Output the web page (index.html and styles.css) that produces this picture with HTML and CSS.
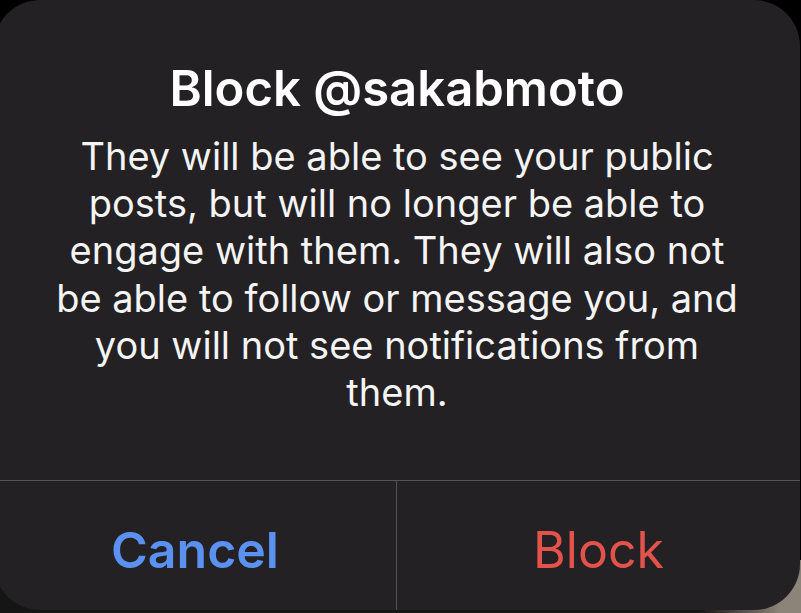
FILE: index.html
```html
<!DOCTYPE html>
<html lang="en">
<head>
    <meta charset="UTF-8">
    <meta name="viewport" content="width=device-width, initial-scale=1.0">
    <title>Block @sakabmoto</title>
    <link rel="stylesheet" href="styles.css">
</head>
<body>

<div class="alerta">
    <div class="alerta-corpo">
        <h1 class="alerta-titulo">Block @sakabmoto</h1>
        <p class="alerta-texto">They will be able to see your public posts, but will no longer be able to engage with them. They will also not be able to follow or message you, and you will not see notifications from them.</p>
    </div>
    <div class="alerta-botoes">
        <button class="botao botao-cancelar">Cancel</button>
        <button class="botao botao-bloquear">Block</button>
    </div>
</div>

</body>
</html>
```

FILE: styles.css
```css
* {
    box-sizing: border-box;
}

body {
    margin: 0;
    height: 613px;
    overflow: hidden;
    font-family: Inter, "Noto Sans", sans-serif;
    background:
        linear-gradient(#000 0, #000 560px, transparent 560px),
        linear-gradient(90deg, #161516 0, #161516 700px, #8c8479 780px);
}

.alerta {
    margin-left: -6px;
    width: 806px;
    height: 610px;
    border-radius: 46px;
    background-color: #232123;
    display: flex;
    flex-direction: column;
}

.alerta-corpo {
    flex: 1;
    padding: 60px 56px 0;
    text-align: center;
    color: #fff;
}

.alerta-titulo {
    margin: 0;
    font-size: 49px;
    font-weight: 600;
    line-height: 58px;
}

.alerta-texto {
    margin: 15px 0 0;
    font-size: 38px;
    line-height: 47.2px;
    font-weight: 400;
    color: #f4f4f4;
}

.alerta-botoes {
    height: 130px;
    display: grid;
    grid-template-columns: 1fr 1fr;
    border-top: 1px solid #555355;
}

.botao {
    background: none;
    border: none;
    margin: 0;
    padding: 8px 0 0;
    font-family: inherit;
    font-size: 50px;
    cursor: pointer;
}

.botao-cancelar {
    color: #5b92f1;
    font-weight: 600;
    border-right: 1px solid #555355;
}

.botao-bloquear {
    color: #e4524c;
    font-weight: 400;
}
```
